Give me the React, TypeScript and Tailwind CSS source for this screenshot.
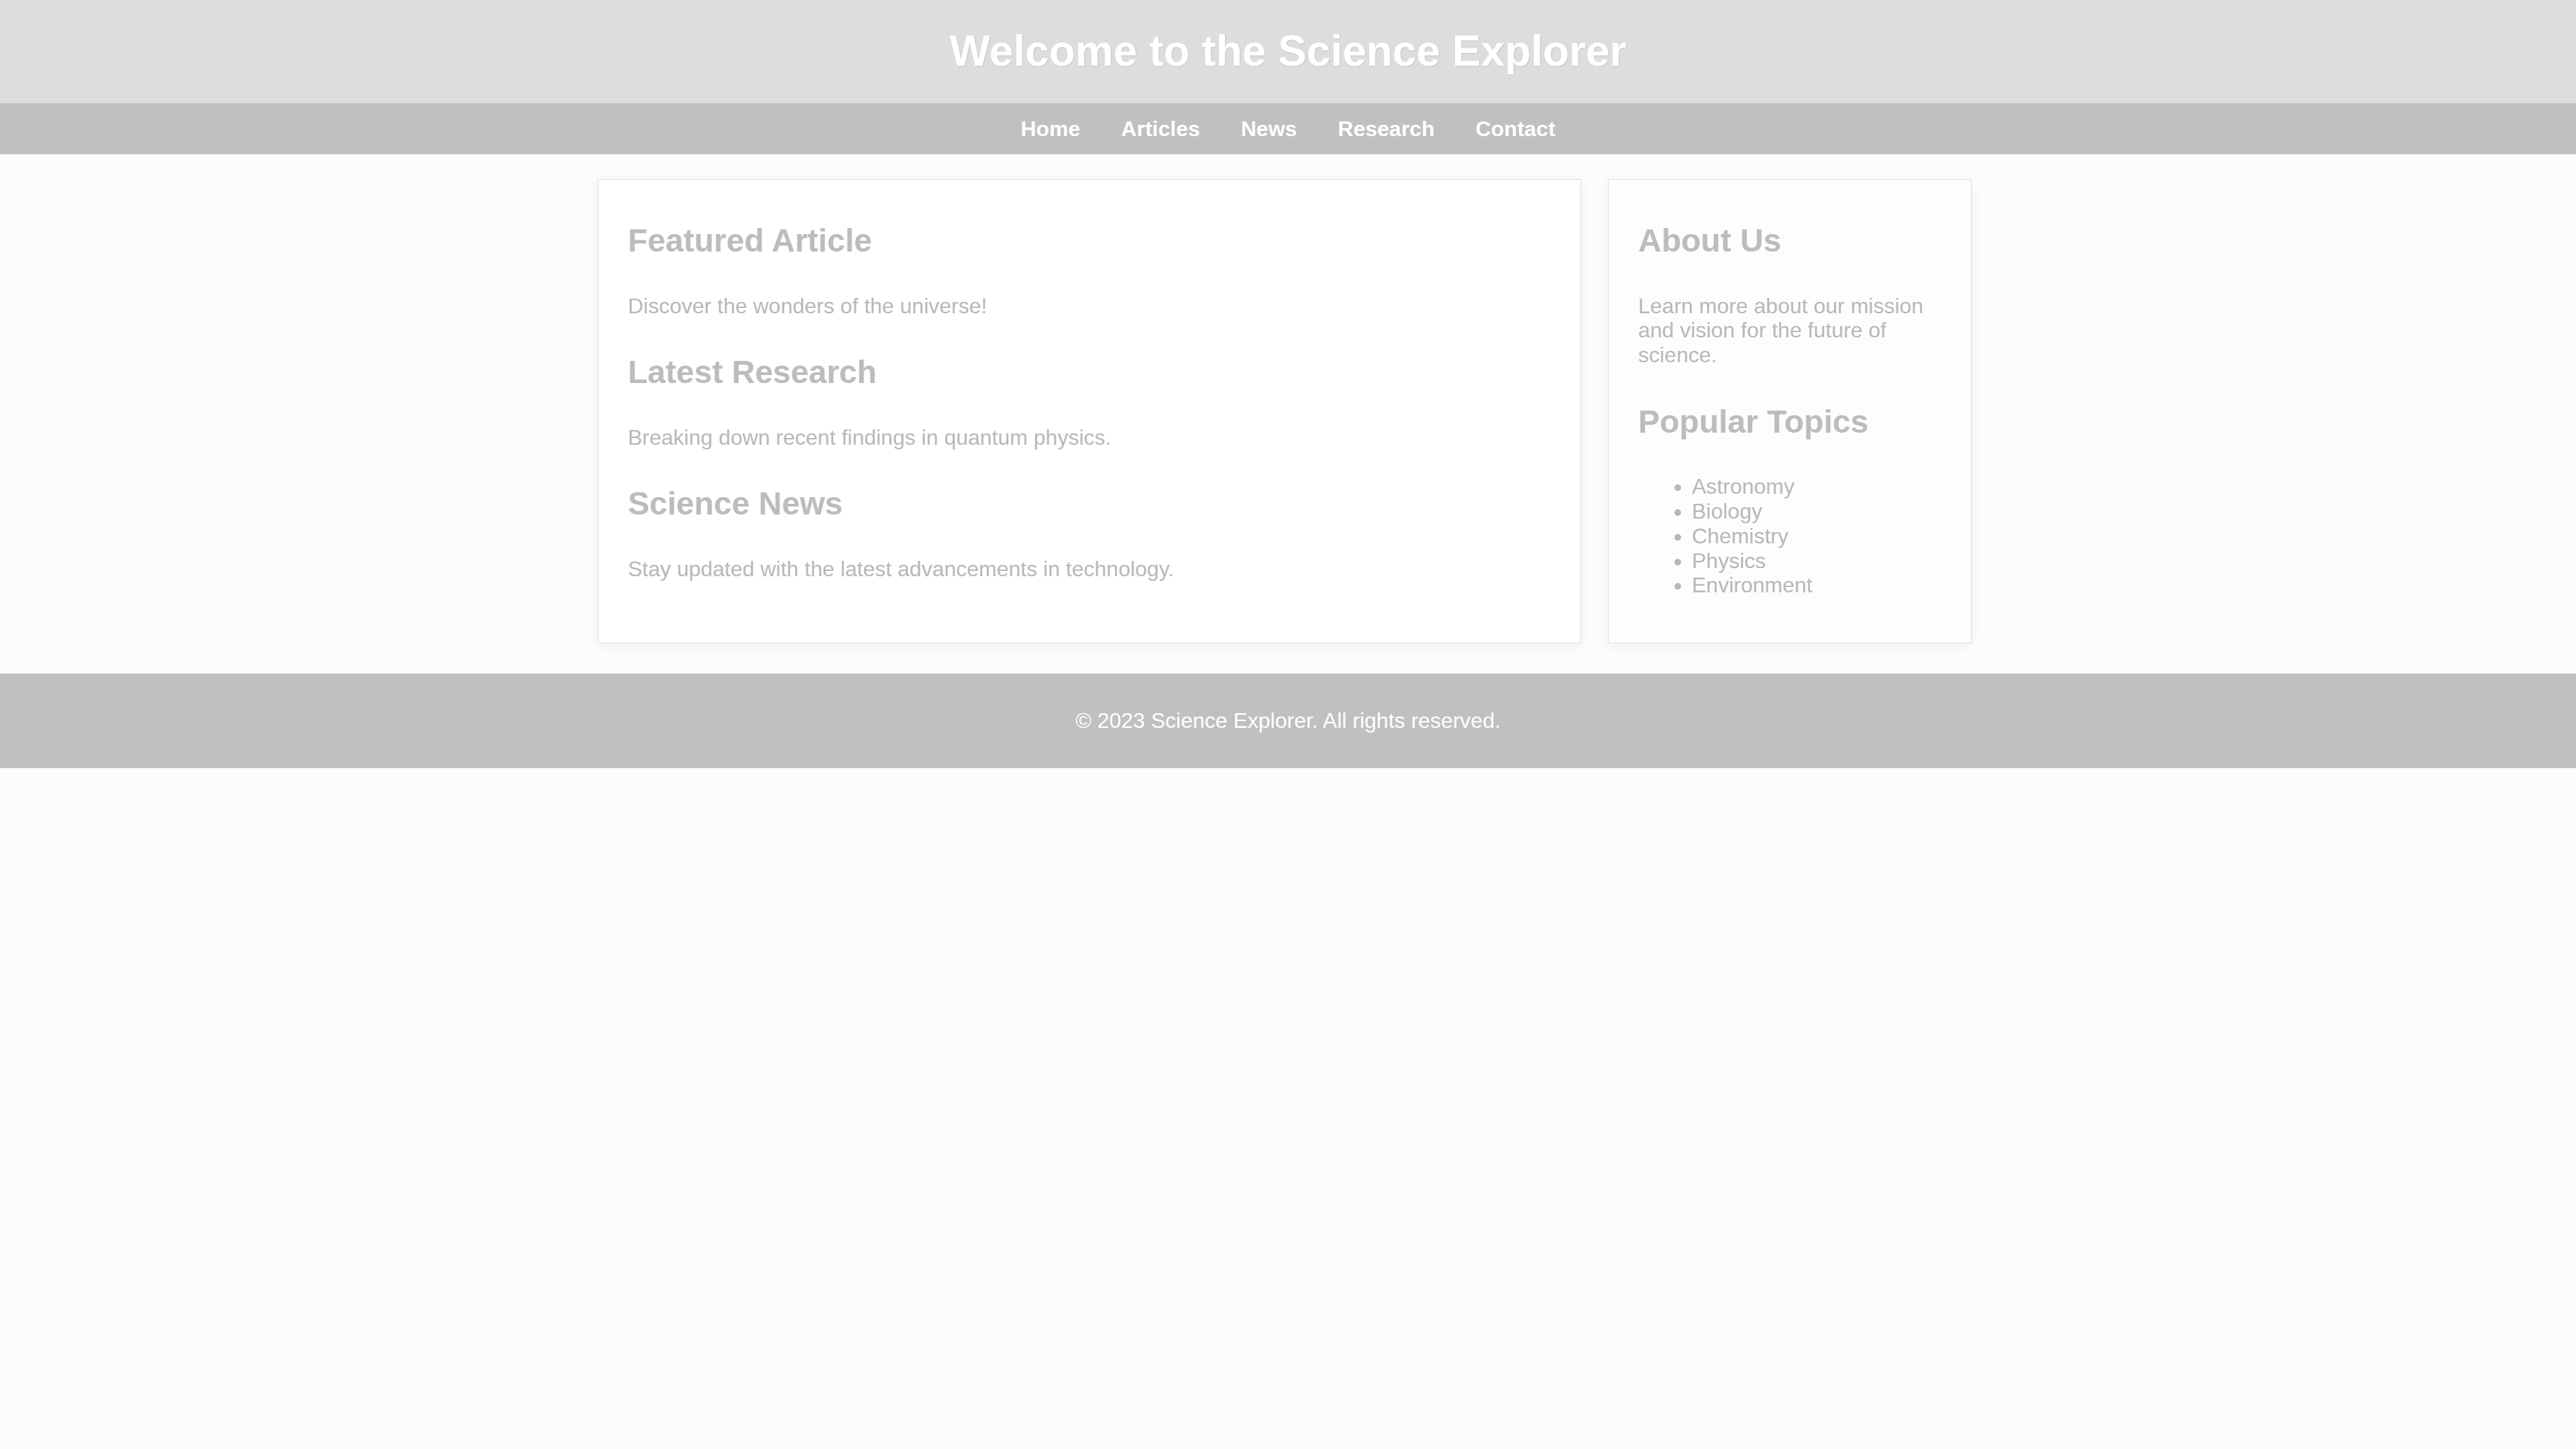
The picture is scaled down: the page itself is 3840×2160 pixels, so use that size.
import React from 'react';

const links = ['Home', 'Articles', 'News', 'Research', 'Contact'];

const articles = [
  { title: 'Featured Article', text: 'Discover the wonders of the universe!' },
  { title: 'Latest Research', text: 'Breaking down recent findings in quantum physics.' },
  { title: 'Science News', text: 'Stay updated with the latest advancements in technology.' },
];

const topics = ['Astronomy', 'Biology', 'Chemistry', 'Physics', 'Environment'];

export default function App() {
  return (
    <div className="min-h-screen bg-[#fcfcfc] font-['Liberation_Sans',Arial,sans-serif] leading-[1.15]">
      <header className="bg-[#dddddd] py-[40px] text-center">
        <h1 className="text-[64px] font-bold text-white [text-shadow:1px_1px_2px_rgba(0,0,0,0.1)]">
          Welcome to the Science Explorer
        </h1>
      </header>

      <nav className="flex justify-center gap-[61px] bg-[#c0c0c0] py-[20px]">
        {links.map((l) => (
          <a key={l} href="#" className="text-[32px] font-bold text-white">
            {l}
          </a>
        ))}
      </nav>

      <main className="flex justify-center gap-[40px] pt-[37px] pb-[45px] pr-[10px]">
        <section className="w-[1466px] border border-[#dedede] bg-white px-[44px] pt-[44px] pb-[39px] shadow-[0_4px_20px_rgba(0,0,0,0.05)]">
          {articles.map((a) => (
            <div key={a.title}>
              <h2 className="mt-[19px] mb-[51px] text-[48px] font-bold text-[#bcbcbc]">{a.title}</h2>
              <p className="mb-[53px] text-[32px] text-[#b8b8b8]">{a.text}</p>
            </div>
          ))}
        </section>

        <aside className="w-[542px] border border-[#dedede] bg-[#fdfdfd] p-[44px] shadow-[0_4px_20px_rgba(0,0,0,0.05)]">
          <h2 className="mt-[19px] mb-[51px] text-[48px] font-bold text-[#bcbcbc]">About Us</h2>
          <p className="mb-[53px] text-[32px] text-[#b8b8b8]">
            Learn more about our mission and vision for the future of science.
          </p>
          <h2 className="mb-[51px] text-[48px] font-bold text-[#bcbcbc]">Popular Topics</h2>
          <ul className="list-disc pl-[80px] text-[32px] text-[#b8b8b8]">
            {topics.map((t) => (
              <li key={t}>{t}</li>
            ))}
          </ul>
        </aside>
      </main>

      <footer className="bg-[#c0c0c0] py-[52px] text-center">
        <p className="text-[32px] text-white">© 2023 Science Explorer. All rights reserved.</p>
      </footer>
    </div>
  );
}
